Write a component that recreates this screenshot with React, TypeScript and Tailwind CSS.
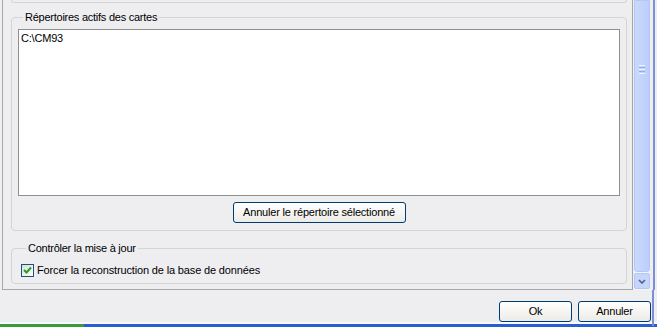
import React from 'react';

const font = { fontFamily: '"Liberation Sans", Arial, sans-serif' };

function XpButton({ label, className }: { label: string; className: string }) {
  return (
    <button
      className={`h-[21px] rounded-[3px] border border-[#003c74] bg-gradient-to-b from-white to-[#ecebe6] text-[11px] tracking-[-0.2px] text-black leading-none ${className}`}
    >
      {label}
    </button>
  );
}

function GroupBox({ title, className, children }: { title: string; className: string; children: React.ReactNode }) {
  return (
    <fieldset className={`border border-[#d4d4d4] rounded-[4px] ${className}`}>
      <legend className="ml-[5px] px-[2px] text-[11px] tracking-[-0.25px] leading-[13px] text-black">{title}</legend>
      {children}
    </fieldset>
  );
}

export default function App() {
  return (
    <div className="w-[657px] h-[327px] bg-[#eeeef1] flex flex-col overflow-hidden" style={font}>
      <div className="flex h-[291px]">
        {/* panneau principal */}
        <div className="ml-[2px] w-[631px] border-l border-r border-b border-[#a7a6aa] flex flex-col pl-[8px] pr-[5px]">
          <div className="h-[3px] border-l border-r border-b border-[#d4d4d4] rounded-b-[4px]" />

          <GroupBox title="Répertoires actifs des cartes" className="mt-[8px] h-[220px] px-[6px] pt-[5px] flex flex-col">
            <div className="h-[167px] bg-white border border-[#8e8f8f] px-[2px] pt-[2px] text-[11px] tracking-[-0.2px] leading-[13px] text-black">
              C:\CM93
            </div>
            <div className="flex justify-center mt-[6px]">
              <XpButton label="Annuler le répertoire sélectionné" className="w-[173px]" />
            </div>
          </GroupBox>

          <GroupBox title="Contrôler la mise à jour" className="mt-[11px] h-[42px] px-[9px] pt-[9px]">
            <label className="flex items-center gap-[3px] text-[11px] tracking-[-0.15px] leading-[13px] text-black">
              <span className="w-[13px] h-[13px] border border-[#1c5180] bg-gradient-to-br from-[#dcdcd7] to-white flex items-center justify-center">
                <svg width="9" height="9" viewBox="0 0 9 9">
                  <path d="M1 4 L3.5 6.5 L8 1.5" fill="none" stroke="#21a121" strokeWidth="2" />
                </svg>
              </span>
              Forcer la reconstruction de la base de données
            </label>
          </GroupBox>
        </div>

        {/* barre de défilement */}
        <div className="w-[16px] ml-[1px] flex flex-col bg-[#f3f3f8]">
          <div className="flex-1 border border-[#b5c8f5] rounded-b-[3px] bg-gradient-to-r from-[#cad9fd] to-[#bccefa] flex items-center justify-center">
            <div className="flex flex-col gap-[1px] -mt-[134px]">
              <div className="w-[6px] h-[1px] bg-[#eef4fe]" />
              <div className="w-[6px] h-[1px] bg-[#8cb0f8]" />
              <div className="w-[6px] h-[1px] bg-[#eef4fe]" />
              <div className="w-[6px] h-[1px] bg-[#8cb0f8]" />
              <div className="w-[6px] h-[1px] bg-[#eef4fe]" />
            </div>
          </div>
          <div className="h-[16px] mt-[1px] mb-[1px] border border-[#b5c8f5] rounded-[2px] bg-[#c5d5fc] flex items-center justify-center">
            <svg width="8" height="5" viewBox="0 0 8 5">
              <path d="M1 1 L4 4 L7 1" fill="none" stroke="#4d6185" strokeWidth="1.6" />
            </svg>
          </div>
        </div>
        <div className="w-[3px]" />
        <div className="w-[2px] bg-[#7b8fdc]" />
      </div>

      {/* boutons */}
      <div className="flex justify-end gap-[6px] mt-[11px] pr-[6px] relative">
        <XpButton label="Ok" className="w-[73px]" />
        <XpButton label="Annuler" className="w-[73px]" />
        <div className="absolute right-[3px] -top-[11px] w-[2px] h-[36px] bg-[#7b8fdc]" />
      </div>

      <div className="flex-1" />
      <div className="h-[2px] bg-[#f7f8fd]" />
      <div className="h-[3px] flex">
        <div className="w-[84px] bg-[#3c9a3c]" />
        <div className="flex-1 bg-[#2a5ed0]" />
      </div>
    </div>
  );
}
